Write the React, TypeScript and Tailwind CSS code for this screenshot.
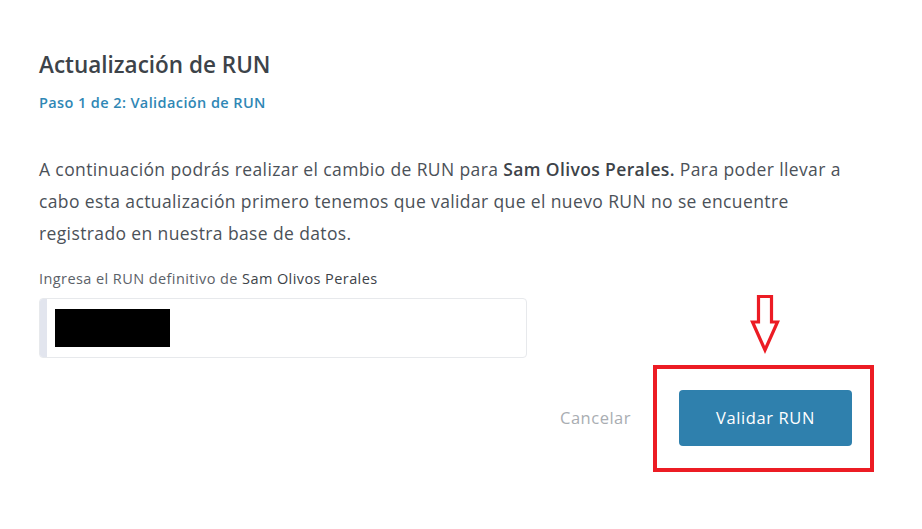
import React from "react";

export default function App() {
  const font = { fontFamily: '"Open Sans", "Noto Sans", sans-serif' };
  return (
    <div className="w-[922px] h-[529px] bg-white relative overflow-hidden" style={font}>
      <div className="pl-[39px] pt-[51px] w-[813px] box-content">
        <h1 className="text-[22.5px] leading-[28px] tracking-[0px] text-[#3d4349] font-semibold">Actualización de RUN</h1>
        <p className="mt-[14px] text-[14.5px] leading-[20px] tracking-[0.4px] font-semibold text-[#2f87b5]">
          Paso 1 de 2: Validación de RUN
        </p>
        <p className="mt-[40px] text-[17.5px] leading-[32px] tracking-[0.38px] text-[#4b5158] whitespace-nowrap">
          A continuación podrás realizar el cambio de RUN para{" "}
          <span className="font-semibold text-[#3d4349]">Sam Olivos Perales.</span> Para poder llevar a
          <br />
          cabo esta actualización primero tenemos que validar que el nuevo RUN no se encuentre
          <br />
          registrado en nuestra base de datos.
        </p>
        <label className="block mt-[20px] text-[14.5px] leading-[20px] tracking-[0.42px] text-[#5b6168]">
          Ingresa el RUN definitivo de <span className="font-medium text-[#3d4349]">Sam Olivos Perales</span>
        </label>
        <div className="mt-[9px] w-[488px] h-[60px] flex rounded-[4px] border border-[#e7e9ec] overflow-hidden">
          <div className="w-[7px] bg-[#e2e5ee]" />
          <div className="flex-1 flex items-center pl-[8px]">
            <div className="w-[115px] h-[38px] bg-black" />
          </div>
        </div>
        <div className="mt-[32px] flex justify-end items-center gap-[48px]">
          <span className="text-[16.5px] tracking-[0.5px] text-[#a9adb2]">Cancelar</span>
          <div className="relative">
            <button className="w-[173px] h-[56px] rounded-[4px] bg-[#2f80ad] text-white text-[16.5px] tracking-[0.6px] font-medium">
              Validar RUN
            </button>
            <div className="absolute left-[-26px] right-[-22px] top-[-25px] bottom-[-26px] border-[4px] border-[#ec1c24] pointer-events-none" />
          </div>
        </div>
      </div>
      <svg className="absolute left-[750px] top-[293px]" width="30" height="62" viewBox="0 0 30 62">
        <polygon
          points="8.5,3.5 21.5,3.5 21.5,29 27.5,29 15,57 2.5,29 8.5,29"
          fill="none"
          stroke="#ec1c24"
          strokeWidth="3.2"
          strokeLinejoin="miter"
        />
      </svg>
    </div>
  );
}
